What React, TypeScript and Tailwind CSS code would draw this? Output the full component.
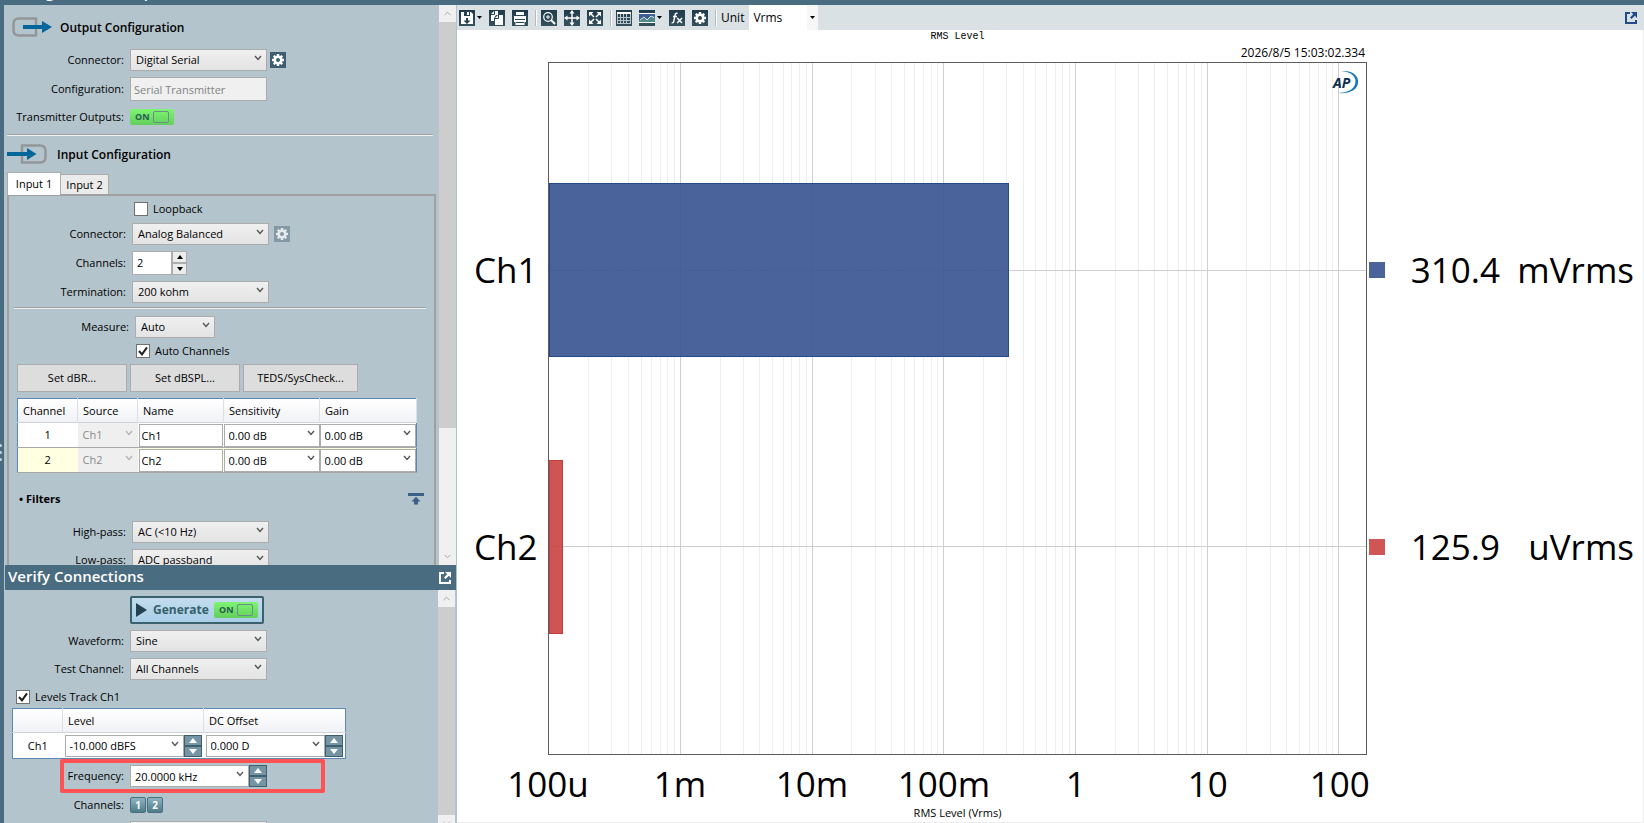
import { useId, type ReactNode } from "react";
import { clsx } from "clsx";
import { ChevronDown, ChevronUp } from "lucide-react";

const channelRows = [
  { id: 1, name: "Ch1", active: false },
  { id: 2, name: "Ch2", active: true },
];

const readings = [
  { label: "Ch1", volts: 0.3104, value: "310.4", unit: "mVrms", fill: "#36528f", stroke: "#234a8c", swatch: "bg-[#4a639b]" },
  { label: "Ch2", volts: 0.0001259, value: "125.9", unit: "uVrms", fill: "#ca4242", stroke: "#c23c3c", swatch: "bg-[#d05555]" },
];

const axisTicks = ["100u", "1m", "10m", "100m", "1", "10", "100"];
const AXIS_MIN = 0.0001;
const AXIS_DECADES = 6.206;

const toPercent = (volts: number) => (Math.log10(volts / AXIS_MIN) / AXIS_DECADES) * 100;

const gridLines = axisTicks.flatMap((_, decade) =>
  [1, 2, 3, 4, 5, 6, 7, 8, 9].map((step) => ({
    x: toPercent(AXIS_MIN * step * 10 ** decade),
    major: step === 1,
  })),
).filter((line) => line.x > 0 && line.x < 100);

/* ---------- small controls ---------- */

function Field({ label, wide, children }: { label: string; wide?: string; children: (id: string) => ReactNode }) {
  const id = useId();
  return (
    <div className="flex items-center gap-[6px]">
      <label htmlFor={id} className={clsx("shrink-0 whitespace-nowrap text-right", wide ?? "w-[117px]")}>
        {label}
      </label>
      {children(id)}
    </div>
  );
}

function Select({ id, value, className, label }: { id?: string; value: string; className?: string; label?: string }) {
  return (
    <span className={clsx("relative block h-[22px]", className ?? "w-[137px]")}>
      <select
        id={id}
        aria-label={label}
        defaultValue={value}
        className="block h-full w-full appearance-none border border-[#acacac] bg-linear-to-b from-[#f0f0f0] to-[#e3e3e3] pl-[5px] pr-5 leading-5 outline-none"
      >
        <option>{value}</option>
      </select>
      <Chevron />
    </span>
  );
}

function Chevron({ className }: { className?: string }) {
  return (
    <svg viewBox="0 0 8 6" className={clsx("pointer-events-none absolute right-[5px] top-[6px] h-[6px] w-2", className ?? "text-[#555]")}>
      <path d="M1 1 L4 4.4 L7 1" fill="none" stroke="currentColor" strokeWidth="1.4" />
    </svg>
  );
}

function ComboInput({ id, value, label }: { id?: string; value: string; label?: string }) {
  return (
    <span className="relative block h-[22px] w-[119px]">
      <input id={id} aria-label={label} defaultValue={value} className="block h-full w-full border border-[#acacac] bg-white pl-1 pr-5 outline-none" />
      <Chevron />
    </span>
  );
}

function StepButtons({ label }: { label: string }) {
  return (
    <span className="flex h-[22px] w-[18px] shrink-0 flex-col">
      {["up", "down"].map((dir) => (
        <button
          key={dir}
          aria-label={`${label} ${dir}`}
          className="flex flex-1 items-center justify-center border border-[#3d606f] bg-[#7595a5]"
        >
          <svg viewBox="0 0 8 5" className={clsx("h-[5px] w-2", dir === "down" && "rotate-180")}>
            <path d="M4 0 L8 5 H0Z" fill="#fff" />
          </svg>
        </button>
      ))}
    </span>
  );
}

function Checkbox({ label, checked }: { label: string; checked?: boolean }) {
  return (
    <label className="flex h-[14px] items-center gap-[5px]">
      <span className="relative block h-[14px] w-[14px]">
        <input type="checkbox" defaultChecked={checked} className="peer block h-full w-full appearance-none border border-[#707070] bg-white" />
        <svg viewBox="0 0 14 14" className="pointer-events-none absolute inset-0 hidden peer-checked:block">
          <path d="M3 7 L6 10.4 L11 3.4" fill="none" stroke="#212121" strokeWidth="2" />
        </svg>
      </span>
      {label}
    </label>
  );
}

function OnBadge() {
  return (
    <span className="flex h-4 w-11 items-center gap-1 rounded-xs bg-linear-to-b from-[#7cf571] to-[#63cf5c] pl-[5px] text-[9px] font-bold leading-4 text-[#2b5a52]">
      ON
      <span className="h-3 w-4 rounded-xs border border-[#6f8a8a]" />
    </span>
  );
}

function Separator() {
  return <hr className="h-[2px] border-0 border-t border-[#a0a0a0] bg-[#eef1f2]" />;
}

function ScrollBar({ thumb, className }: { thumb: string; className?: string }) {
  return (
    <div className={clsx("flex w-[17px] shrink-0 flex-col bg-[#f0f0f0] text-[#a0a0a0]", className)}>
      <span className="flex h-[17px] shrink-0 items-center justify-center">
        <ChevronUp size={11} />
      </span>
      <span className={clsx("bg-[#cdcdcd]", thumb)} />
      <span className="mt-auto flex h-[17px] shrink-0 items-center justify-center">
        <ChevronDown size={11} />
      </span>
    </div>
  );
}

/* ---------- icons ---------- */

function GearShape() {
  return (
    <g>
      <circle cx="8" cy="8" r="3.3" fill="none" stroke="#fff" strokeWidth="2.6" />
      {[0, 45, 90, 135, 180, 225, 270, 315].map((angle) => (
        <rect key={angle} x="6.8" y="2" width="2.4" height="2.4" fill="#fff" transform={`rotate(${angle} 8 8)`} />
      ))}
    </g>
  );
}

function GearButton({ label, dim }: { label: string; dim?: boolean }) {
  return (
    <button aria-label={label} className={clsx("h-4 w-4 shrink-0", dim ? "-ml-px bg-[#8499a6]" : "-ml-[3px] bg-[#3f5d6f]")}>
      <svg viewBox="0 0 16 16" className={clsx("block h-4 w-4", dim && "opacity-80")}>
        <GearShape />
      </svg>
    </button>
  );
}

function ToolButton({ label, menu, children }: { label: string; menu?: boolean; children: ReactNode }) {
  return (
    <button aria-label={label} className="flex shrink-0 items-center gap-[2px]">
      <svg viewBox="0 0 16 16" className="h-4 w-4 bg-linear-to-b from-[#1f3b4a] to-[#36525f]">
        {children}
      </svg>
      {menu && <Caret />}
    </button>
  );
}

function Caret() {
  return (
    <svg viewBox="0 0 5 3" className="h-[3px] w-[5px]">
      <path d="M0 0 H5 L2.5 3Z" fill="#000" />
    </svg>
  );
}

function PopOutIcon() {
  return (
    <svg viewBox="0 0 12 12" className="h-3 w-3">
      <path d="M5 1 H1 V11 H11 V8" fill="none" stroke="currentColor" strokeWidth="2" />
      <path d="M6 0 H12 V6 L9.8 3.8 L6.6 7 L5 5.4 L8.2 2.2Z" fill="currentColor" />
    </svg>
  );
}

function PortIcon({ input }: { input?: boolean }) {
  return (
    <svg viewBox="0 0 40 20" className="h-5 w-10 shrink-0">
      {input ? (
        <>
          <path d="M15 1.5 H33 Q38.5 1.5 38.5 7 V13 Q38.5 18.5 33 18.5 H15Z" fill="none" stroke="#929699" strokeWidth="2.4" />
          <path d="M0 8 H20 V4 L29.5 10 L20 16 V12 H0Z" fill="#03669b" />
        </>
      ) : (
        <>
          <path d="M24 1.5 H7 Q1.5 1.5 1.5 7 V13 Q1.5 18.5 7 18.5 H24Z" fill="none" stroke="#929699" strokeWidth="2.4" />
          <path d="M11 8 H30 V4 L40 10 L30 16 V12 H11Z" fill="#03669b" />
        </>
      )}
    </svg>
  );
}

/* ---------- left side ---------- */

function ChannelTable() {
  const head = "border-r border-[#dcdfe3] pl-[5px] text-left font-normal";
  const field = "block h-[23px] w-full border border-[#acacac] bg-white outline-none";
  return (
    <table className="ml-2 w-[400px] table-fixed border-collapse border border-[#5f87b5] bg-white">
      <colgroup>
        <col className="w-[60px]" />
        <col className="w-[60px]" />
        <col className="w-[86px]" />
        <col className="w-[96px]" />
        <col />
      </colgroup>
      <thead>
        <tr className="h-6 border-b border-[#cfd3d8] bg-linear-to-b from-white to-[#f1f2f5]">
          {["Channel", "Source", "Name", "Sensitivity", "Gain"].map((title) => (
            <th key={title} className={head}>{title}</th>
          ))}
        </tr>
      </thead>
      <tbody>
        {channelRows.map((row) => (
          <tr key={row.id} className={clsx("h-[25px] border-b border-[#a8a8a8]", row.active && "bg-[#ffffe1]")}>
            <td className="p-0 text-center">{row.id}</td>
            <td className="bg-[#efefef] p-0">
              <span className="relative block">
                <select disabled aria-label={`Source ${row.id}`} className="block h-[23px] w-full appearance-none pl-[5px] text-[#8a8a8a] opacity-100">
                  <option>{row.name}</option>
                </select>
                <Chevron className="text-[#b5b5b5]" />
              </span>
            </td>
            <td className="px-px py-0">
              <input aria-label={`Name ${row.id}`} defaultValue={row.name} className={clsx(field, "pl-[2px]")} />
            </td>
            {["Sensitivity", "Gain"].map((title) => (
              <td key={title} className="p-0">
                <span className="relative block">
                  <input aria-label={`${title} ${row.id}`} defaultValue="0.00 dB" className={clsx(field, "pl-1")} />
                  <Chevron />
                </span>
              </td>
            ))}
          </tr>
        ))}
      </tbody>
    </table>
  );
}

function InputPanel() {
  return (
    <div className="mr-[3px] flex min-h-0 flex-1 flex-col gap-[6px] overflow-hidden border-2 border-b-0 border-[#a0a0a0] pt-[6px]">
      <div className="shrink-0 pb-px pl-[125px]">
        <Checkbox label="Loopback" />
      </div>
      <Field label="Connector:">
        {(id) => (
          <>
            <Select id={id} value="Analog Balanced" />
            <GearButton label="Input connector settings" dim />
          </>
        )}
      </Field>
      <Field label="Channels:">
        {(id) => (
          <span className="flex h-6">
            <input id={id} defaultValue="2" className="w-10 border border-[#acacac] bg-white pl-1 outline-none" />
            <span className="flex w-[15px] flex-col">
              {["up", "down"].map((dir) => (
                <button key={dir} aria-label={`Channels ${dir}`} className="flex flex-1 items-center justify-center border border-[#acacac] bg-[#ececec]">
                  <svg viewBox="0 0 6 4" className={clsx("h-1 w-[6px]", dir === "down" && "rotate-180")}>
                    <path d="M3 0 L6 4 H0Z" fill="#000" />
                  </svg>
                </button>
              ))}
            </span>
          </span>
        )}
      </Field>
      <Field label="Termination:">{(id) => <Select id={id} value="200 kohm" />}</Field>
      <div className="-mt-[2px] mb-px ml-[5px] mr-2">
        <Separator />
      </div>
      <Field label="Measure:" wide="w-[120px]">{(id) => <Select id={id} value="Auto" className="w-20" />}</Field>
      <div className="shrink-0 pl-[127px]">
        <Checkbox label="Auto Channels" checked />
      </div>
      <div className="ml-2 flex h-7 shrink-0 gap-[3px]">
        <button className="w-[110px] border border-[#acacac] bg-[#dddddd]">Set dBR...</button>
        <button className="w-[110px] border border-[#acacac] bg-[#dddddd]">Set dBSPL...</button>
        <button className="w-[115px] border border-[#acacac] bg-[#dddddd]">TEDS/SysCheck...</button>
      </div>
      <ChannelTable />
      <div className="mt-2 flex h-6 shrink-0 items-center justify-between pl-[10px] pr-[10px]">
        <h3 className="font-bold">• Filters</h3>
        <button aria-label="Collapse to top" className="text-[#3d6088]">
          <svg viewBox="0 0 16 12" className="h-3 w-4">
            <path d="M0 0 H16 V3 H0Z M8 3.8 L12.5 8.4 H10 V11.6 H6 V8.4 H3.5Z" fill="currentColor" />
          </svg>
        </button>
      </div>
      <div className="mt-1">
        <Field label="High-pass:">{(id) => <Select id={id} value="AC (<10 Hz)" />}</Field>
      </div>
      <Field label="Low-pass:">{(id) => <Select id={id} value="ADC passband" />}</Field>
    </div>
  );
}

function ConfigurationPane() {
  return (
    <section className="flex min-h-0 flex-1">
      <div className="flex min-w-0 flex-1 flex-col overflow-hidden pl-[3px]">
        <div className="mt-2 flex h-7 shrink-0 items-center gap-2 pl-[5px]">
          <PortIcon />
          <h2 className="pt-[2px] text-[12px] font-semibold">Output Configuration</h2>
        </div>
        <div className="mt-2 flex flex-col gap-[6px]">
          <Field label="Connector:">
            {(id) => (
              <>
                <Select id={id} value="Digital Serial" />
                <GearButton label="Output connector settings" />
              </>
            )}
          </Field>
          <Field label="Configuration:">
            {(id) => <input id={id} disabled defaultValue="Serial Transmitter" className="h-6 w-[137px] border border-[#acacac] bg-[#f0f0f0] pl-[3px] text-[#838383]" />}
          </Field>
          <div className="mt-[2px]">
            <Field label="Transmitter Outputs:">
              {(id) => (
                <button id={id} role="switch" aria-checked="true">
                  <OnBadge />
                </button>
              )}
            </Field>
          </div>
        </div>
        <div className="mr-[6px] mt-[9px]">
          <Separator />
        </div>
        <div className="mt-1 flex h-7 shrink-0 items-center gap-[10px]">
          <PortIcon input />
          <h2 className="pt-[2px] text-[12px] font-semibold">Input Configuration</h2>
        </div>
        <div role="tablist" className="mt-1 flex h-[22px] shrink-0 items-end">
          <button role="tab" aria-selected="true" className="z-10 -mb-px h-[23px] w-[54px] self-end border border-b-0 border-[#acacac] bg-white">
            Input 1
          </button>
          <button role="tab" aria-selected="false" className="h-5 w-12 border border-l-0 border-b-0 border-[#acacac] bg-[#ebebeb]">
            Input 2
          </button>
        </div>
        <InputPanel />
      </div>
      <ScrollBar thumb="h-[406px]" />
    </section>
  );
}

function VerifyPane() {
  return (
    <section className="flex h-[258px] shrink-0 flex-col">
      <header className="ml-px flex h-[25px] shrink-0 items-center justify-between bg-[#4a6c80] pl-[3px] pr-[5px] text-white">
        <h2 className="pb-1 text-[15px] font-semibold leading-5">Verify Connections</h2>
        <button aria-label="Undock Verify Connections">
          <PopOutIcon />
        </button>
      </header>
      <div className="flex min-h-0 flex-1">
        <div className="flex min-w-0 flex-1 flex-col gap-[6px] overflow-hidden pl-[3px] pt-[6px]">
          <button className="ml-[123px] flex h-7 w-[134px] shrink-0 items-center rounded-xs border-2 border-[#3a626d] bg-linear-to-b from-[#c3dced] to-[#a9cee6] pl-1 font-bold text-[#35606b]">
            <svg viewBox="0 0 11 14" className="mr-[6px] h-[14px] w-[11px]">
              <path d="M0 0 L11 7 L0 14Z" fill="#24424f" />
            </svg>
            <span className="flex-1 text-left text-[12px]">Generate</span>
            <span className="mr-1">
              <OnBadge />
            </span>
          </button>
          <Field label="Waveform:">{(id) => <Select id={id} value="Sine" />}</Field>
          <Field label="Test Channel:">{(id) => <Select id={id} value="All Channels" />}</Field>
          <div className="mt-1 shrink-0 pl-[9px]">
            <Checkbox label="Levels Track Ch1" checked />
          </div>
          <table className="-mt-[2px] ml-[5px] w-[334px] table-fixed border-collapse border border-[#5f87b5] bg-white">
            <colgroup>
              <col className="w-[50px]" />
              <col className="w-[141px]" />
              <col />
            </colgroup>
            <thead>
              <tr className="h-6 border-b border-[#cfd3d8] bg-linear-to-b from-white to-[#f1f2f5] text-left">
                <th className="border-r border-[#dcdfe3]" />
                <th className="border-r border-[#dcdfe3] pl-[5px] font-normal">Level</th>
                <th className="pl-[5px] font-normal">DC Offset</th>
              </tr>
            </thead>
            <tbody>
              <tr className="h-[26px]">
                <td className="p-0 text-center">Ch1</td>
                {[
                  { label: "Level", value: "-10.000 dBFS" },
                  { label: "DC Offset", value: "0.000 D" },
                ].map((cell) => (
                  <td key={cell.label} className="py-0 pl-[2px] pr-0">
                    <span className="flex">
                      <ComboInput value={cell.value} label={cell.label} />
                      <StepButtons label={cell.label} />
                    </span>
                  </td>
                ))}
              </tr>
            </tbody>
          </table>
          <div className="-mt-[6px] ml-[53px] flex h-[34px] w-[265px] shrink-0 items-center rounded-xs border-4 border-[#ff5252]">
            <Field label="Frequency:" wide="w-[60px]">
              {(id) => (
                <span className="flex">
                  <ComboInput id={id} value="20.0000 kHz" />
                  <StepButtons label="Frequency" />
                </span>
              )}
            </Field>
          </div>
          <div className="-mt-[2px] flex shrink-0 items-center gap-[6px]">
            <span className="w-[117px] text-right">Channels:</span>
            <span className="flex gap-px">
              {[1, 2].map((channel) => (
                <button
                  key={channel}
                  className="h-4 w-4 rounded-xs border border-[#47707f] bg-linear-to-b from-[#8fb3c2] to-[#4d7c88] text-[10px] font-bold leading-[14px] text-white"
                >
                  {channel}
                </button>
              ))}
            </span>
          </div>
          <span className="ml-[123px] mt-[2px]">
            <Select value="" label="Additional setting" />
          </span>
        </div>
        <ScrollBar thumb="min-h-0 flex-1" className="-mb-[9px] mr-px" />
      </div>
    </section>
  );
}

/* ---------- right side ---------- */

function ToolDivider() {
  return <span className="-mr-[3px] h-4 w-[2px] shrink-0 border-r border-white bg-[#b5bcc0]" />;
}

function Toolbar() {
  return (
    <div className="flex h-[25px] shrink-0 items-center gap-[7px] bg-[#dae1e4] pl-[2px] pr-[7px] text-[#234a8c]">
      <ToolButton label="Save" menu>
        <path d="M2 2 H12 L14 4 V14 H2Z" fill="#fff" />
        <path d="M5 2 H11 V6 H5Z" fill="#26414f" />
        <path d="M8 2 H10 V5 H8Z" fill="#fff" />
        <path d="M7 8 H9 V10.5 H11.5 L8 14 L4.5 10.5 H7Z" fill="#26414f" />
      </ToolButton>
      <ToolButton label="Copy">
        <path d="M2 4 L5 1 H9 V5 H7 L5 8 V11 H2Z" fill="#fff" />
        <path d="M6 8 L9 5 H14 V15 H6Z" fill="#fff" />
        <path d="M6 8.5 H9.5 V5 M2 4.5 H5.5 V1" fill="none" stroke="#26414f" />
      </ToolButton>
      <ToolButton label="Print">
        <path d="M4 2 H12 V5 H4Z M2 6 H14 V12 H2Z" fill="#fff" />
        <path d="M3 9.5 H13" stroke="#26414f" />
        <path d="M3.5 11 H12.5 V15 H3.5Z" fill="#fff" />
        <path d="M4 12.5 H12" stroke="#26414f" />
      </ToolButton>
      <ToolDivider />
      <ToolButton label="Zoom">
        <circle cx="7" cy="7" r="4.3" fill="none" stroke="#fff" strokeWidth="1.2" />
        <path d="M5 7 H9 M7 5 V9" stroke="#fff" />
        <path d="M10 10 L14 14" stroke="#fff" strokeWidth="2" />
      </ToolButton>
      <ToolButton label="Pan">
        <path d="M8 2 V14 M2 8 H14" stroke="#fff" strokeWidth="1.4" />
        <path d="M8 0 L10.5 3.5 H5.5Z M8 16 L10.5 12.5 H5.5Z M0 8 L3.5 5.5 V10.5Z M16 8 L12.5 5.5 V10.5Z" fill="#fff" />
      </ToolButton>
      <ToolButton label="Fit to view">
        <path d="M3 3 L7 7 M13 3 L9 7 M3 13 L7 9 M13 13 L9 9" stroke="#fff" strokeWidth="1.5" />
        <path d="M2 2 H6.5 L2 6.5Z M14 2 V6.5 L9.5 2Z M2 14 V9.5 L6.5 14Z M14 14 H9.5 L14 9.5Z" fill="#fff" />
      </ToolButton>
      <ToolDivider />
      <ToolButton label="Data table">
        <path d="M1 3 H15" stroke="#fff" strokeWidth="2" />
        <path d="M1.5 4 V14 M4.5 4 V14 M7.5 4 V14 M10.5 4 V14 M14.5 4 V14 M1 7.5 H15 M1 10.5 H15 M1 13.5 H15" stroke="#b9c6cc" />
      </ToolButton>
      <ToolButton label="Graph style" menu>
        <path d="M0 3 H16 V13 H0Z" fill="#3f5f92" />
        <path d="M0 10 L5 7.5 L8 10 L12 6 L16 7 V12 H0Z" fill="#4f8a8b" />
        <path d="M0 3.5 H16 M0 12.5 H16" stroke="#fff" />
        <path d="M1 10 L5 7 L8 10 L12 6 L15 7.5" fill="none" stroke="#fff" strokeWidth="0.8" />
      </ToolButton>
      <ToolButton label="Functions">
        <path d="M8.6 3.4 Q6.6 2.6 6.1 5 L4.7 11.6 Q4.3 13.2 2.6 12.8 M4 6.5 H8" fill="none" stroke="#fff" strokeWidth="1.4" />
        <path d="M8.2 8 L13 13 M13 8 L8.2 13" stroke="#fff" strokeWidth="1.4" />
      </ToolButton>
      <ToolButton label="Graph settings">
        <GearShape />
      </ToolButton>
      <ToolDivider />
      <label htmlFor="unit" className="text-[12px] text-black">Unit</label>
      <span className="relative -ml-[2px] block h-full w-[69px]">
        <select id="unit" defaultValue="Vrms" className="block h-full w-full appearance-none bg-white pl-1 text-[12px] text-black outline-none">
          <option>Vrms</option>
        </select>
        <span className="pointer-events-none absolute inset-y-0 right-0 flex w-[11px] items-center justify-center bg-[#f7f7f7]">
          <Caret />
        </span>
      </span>
      <button aria-label="Undock graph" className="ml-auto">
        <PopOutIcon />
      </button>
    </div>
  );
}

function ApLogo() {
  return (
    <svg viewBox="0 0 28 26" className="absolute right-[6px] top-[6px] h-[26px] w-7">
      <path d="M9 2 C22 1 27 8 26 14 C25 21 18 25 5 24 C16 24 23 20 23.5 13 C24 7 19 3 9 2Z" fill="#1277bd" />
      <text x="1" y="19" fontSize="14" fontWeight="bold" fontStyle="italic" fill="#0c2f4f" fontFamily="Open Sans, sans-serif">AP</text>
    </svg>
  );
}

function Plot() {
  return (
    <div className="relative border border-[#5c5c5c]">
      <svg className="absolute inset-0 h-full w-full" shapeRendering="crispEdges">
        {gridLines.map((line) => (
          <line key={line.x} x1={`${line.x}%`} x2={`${line.x}%`} y1="0" y2="100%" stroke={line.major ? "#cfcfcf" : "#ededed"} />
        ))}
        {readings.map((reading, index) => (
          <g key={reading.label}>
            <line x1="0" x2="100%" y1={`${30 + index * 40}%`} y2={`${30 + index * 40}%`} stroke="#cfcfcf" />
            <rect
              x="0"
              y={`${17.5 + index * 40}%`}
              width={`${toPercent(reading.volts)}%`}
              height="25%"
              fill={reading.fill}
              fillOpacity="0.9"
              stroke={reading.stroke}
            />
          </g>
        ))}
      </svg>
      <ApLogo />
    </div>
  );
}

function Graph() {
  return (
    <div className="flex min-h-0 flex-1 flex-col border-b border-r border-[#ececec] bg-white">
      <div className="grid shrink-0 grid-cols-[91px_1fr_276px]">
        <h1 className="col-start-2 h-3 pt-px text-center font-[Liberation_Mono,monospace] text-[10px] leading-3">RMS Level</h1>
        <time className="col-start-2 h-5 pr-[2px] text-right text-[12px] leading-[22px]">2026/8/5 15:03:02.334</time>
      </div>
      <div className="grid min-h-0 flex-1 grid-cols-[91px_1fr_276px] text-[35px] leading-[40px]">
        <div className="flex flex-col py-[69px] pl-[17px]">
          {readings.map((reading) => (
            <span key={reading.label} className="flex flex-1 items-center">{reading.label}</span>
          ))}
        </div>
        <Plot />
        <div className="flex flex-col py-[69px] pl-[2px] pr-[9px]">
          {readings.map((reading) => (
            <div key={reading.label} className="flex flex-1 items-center">
              <span className={clsx("h-4 w-4 shrink-0", reading.swatch)} />
              <span className="w-[115px] text-right">{reading.value}</span>
              <span className="flex-1 text-right">{reading.unit}</span>
            </div>
          ))}
        </div>
      </div>
      <div className="grid shrink-0 grid-cols-[91px_1fr_276px]">
        <svg className="col-start-2 h-[49px] w-full overflow-visible text-[35px]">
          {axisTicks.map((tick, decade) => (
            <text key={tick} x={`${(decade / AXIS_DECADES) * 100}%`} y="42" textAnchor="middle">{tick}</text>
          ))}
        </svg>
        <p className="col-start-2 h-[18px] text-center leading-[18px]">RMS Level (Vrms)</p>
      </div>
    </div>
  );
}

export default function App() {
  return (
    <div className="flex h-screen flex-col overflow-hidden bg-[#4a6c80] font-['Open_Sans',sans-serif] text-[11px] leading-[14px] text-black">
      <div className="flex h-[5px] shrink-0 items-end overflow-hidden pl-2 text-[15px] font-semibold leading-[14px] text-white">
        <span className="mb-[6px]">Configuration Setup</span>
      </div>
      <div className="flex min-h-0 flex-1">
        <div className="flex w-1 shrink-0 flex-col items-start justify-center gap-1 pt-[76px]">
          {[0, 1, 2].map((dot) => (
            <span key={dot} className="h-[3px] w-[2px] rounded-r-full bg-[#c5d2d9]" />
          ))}
        </div>
        <aside className="flex w-[453px] shrink-0 flex-col border-r border-[#b4c4cc] bg-[#b4c4cc]">
          <ConfigurationPane />
          <VerifyPane />
        </aside>
        <main className="flex min-w-0 flex-1 flex-col">
          <Toolbar />
          <Graph />
        </main>
      </div>
    </div>
  );
}
